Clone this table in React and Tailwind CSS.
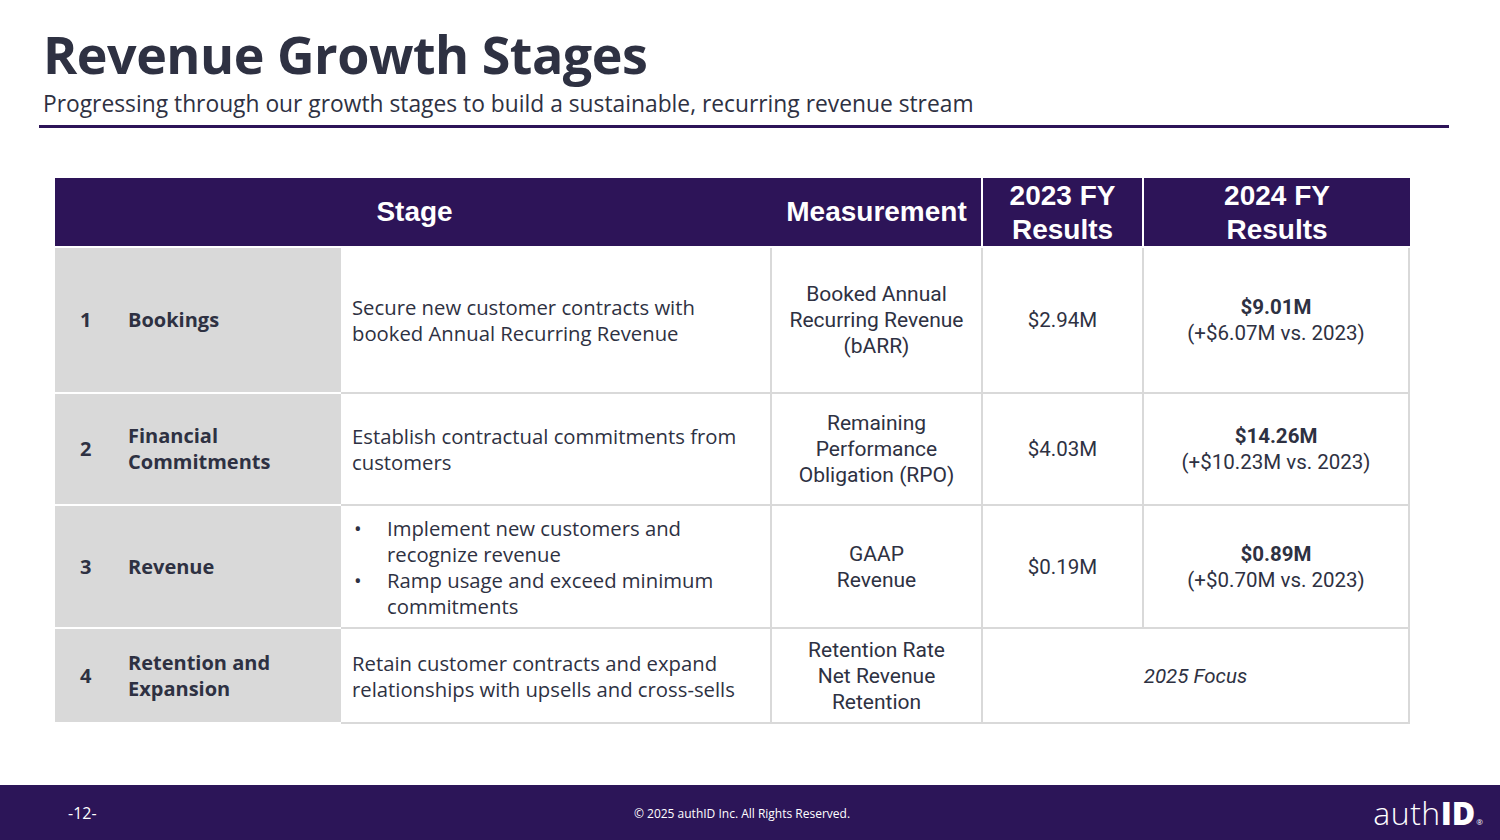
const ROWS = [
  {
    n: "1",
    stage: ["Bookings"],
    desc: "Secure new customer contracts with booked Annual Recurring Revenue",
    measure: ["Booked Annual", "Recurring Revenue", "(bARR)"],
    y23: "$2.94M",
    y24: "$9.01M",
    delta: "(+$6.07M vs. 2023)",
    h: "h-[146px]",
  },
  {
    n: "2",
    stage: ["Financial", "Commitments"],
    desc: "Establish contractual commitments from customers",
    measure: ["Remaining", "Performance", "Obligation (RPO)"],
    y23: "$4.03M",
    y24: "$14.26M",
    delta: "(+$10.23M vs. 2023)",
    h: "h-[112px]",
  },
  {
    n: "3",
    stage: ["Revenue"],
    bullets: ["Implement new customers and recognize revenue", "Ramp usage and exceed minimum commitments"],
    measure: ["GAAP", "Revenue"],
    y23: "$0.19M",
    y24: "$0.89M",
    delta: "(+$0.70M vs. 2023)",
    h: "h-[123px]",
  },
  {
    n: "4",
    stage: ["Retention and", "Expansion"],
    desc: "Retain customer contracts and expand relationships with upsells and cross-sells",
    measure: ["Retention Rate", "Net Revenue", "Retention"],
    focus: "2025 Focus",
    h: "h-[95px]",
  },
];

const body = { fontFamily: '"Open Sans", "Noto Sans", sans-serif' };
const narrow = { fontFamily: 'Roboto, "Liberation Sans", sans-serif' };
const head = { fontFamily: '"Liberation Sans", Arial, sans-serif' };

export default function App() {
  return (
    <div className="w-[1500px] h-[840px] bg-white flex flex-col overflow-hidden text-[#2e3142]" style={body}>
      {/* TITLE */}
      <div className="pl-[43px] pt-[24px] pr-[51px]">
        <h1 className="text-[52px] leading-[60px] font-bold text-[#2e3142] tracking-[-0.5px]" style={body}>
          Revenue Growth Stages
        </h1>
        <p className="text-[22.8px] leading-[30px] text-[#2e3142] mt-[5px]">
          Progressing through our growth stages to build a sustainable, recurring revenue stream
        </p>
      </div>
      <div className="ml-[39px] mr-[51px] mt-[6px] h-[3px] bg-[#2d1458]" />

      {/* TABLE */}
      <div className="ml-[55px] mt-[50px] w-[1355px]">
        <div className="flex h-[70px] bg-[#2d1458] text-white font-bold text-[28px] leading-[34px] border-b-2 border-white" style={head}>
          <div className="w-[717px] flex items-center justify-center pl-[2px]">Stage</div>
          <div className="w-[211px] flex items-center justify-center border-r-2 border-white">Measurement</div>
          <div className="w-[161px] flex items-center justify-center text-center border-r-2 border-white pt-[2px]">
            2023 FY<br />Results
          </div>
          <div className="w-[266px] flex items-center justify-center text-center pt-[2px]">
            2024 FY<br />Results
          </div>
        </div>

        {ROWS.map((r) => (
          <div key={r.n} className={`flex ${r.h} leading-[26px]`}>
            <div className="w-[286px] bg-[#d9d9d9] flex items-center border-b-2 border-white font-bold text-[20px] text-[#2e3142]">
              <span className="w-[73px] pl-[25px]">{r.n}</span>
              <span>
                {r.stage.map((s) => (
                  <div key={s}>{s}</div>
                ))}
              </span>
            </div>
            <div className="w-[431px] flex items-center pl-[11px] pr-2 text-[20.3px] border-b-2 border-r-2 border-[#d9d9d9]">
              {r.bullets ? (
                <ul>
                  {r.bullets.map((b) => (
                    <li key={b} className="flex">
                      <span className="w-[35px] pl-[2px] shrink-0">•</span>
                      <span className="pr-4">{b}</span>
                    </li>
                  ))}
                </ul>
              ) : (
                <p>{r.desc}</p>
              )}
            </div>
            <div className="w-[211px] flex flex-col items-center justify-center text-center text-[21px] border-b-2 border-r-2 border-[#d9d9d9]" style={narrow}>
              {r.measure.map((m) => (
                <div key={m}>{m}</div>
              ))}
            </div>
            {r.focus ? (
              <div className="w-[427px] flex items-center justify-center italic text-[20.5px] border-b-2 border-r-2 border-[#d9d9d9]" style={narrow}>
                {r.focus}
              </div>
            ) : (
              <>
                <div className="w-[161px] flex items-center justify-center text-[20.5px] border-b-2 border-r-2 border-[#d9d9d9]" style={narrow}>
                  {r.y23}
                </div>
                <div className="w-[266px] flex flex-col items-center justify-center text-[20.5px] border-b-2 border-r-2 border-[#d9d9d9]" style={narrow}>
                  <div className="font-bold">{r.y24}</div>
                  <div>{r.delta}</div>
                </div>
              </>
            )}
          </div>
        ))}
      </div>

      {/* FOOTER */}
      <div className="mt-auto h-[55px] bg-[#2c1558] flex items-center text-white">
        <div className="w-[600px] pl-[68px] text-[16px]" style={body}>-12-</div>
        <div className="flex-1 text-center text-[12px] pr-[16px] pt-[2px]" style={body}>
          © 2025 authID Inc. All Rights Reserved.
        </div>
        <div className="w-[600px] flex justify-end pr-[17px] items-baseline">
          <span className="text-[32px] font-light tracking-[0.5px]" style={body}>auth</span>
          <span className="text-[32px] font-extrabold" style={body}>ID</span>
          <span className="text-[8px] ml-[1px]">®</span>
        </div>
      </div>
    </div>
  );
}
